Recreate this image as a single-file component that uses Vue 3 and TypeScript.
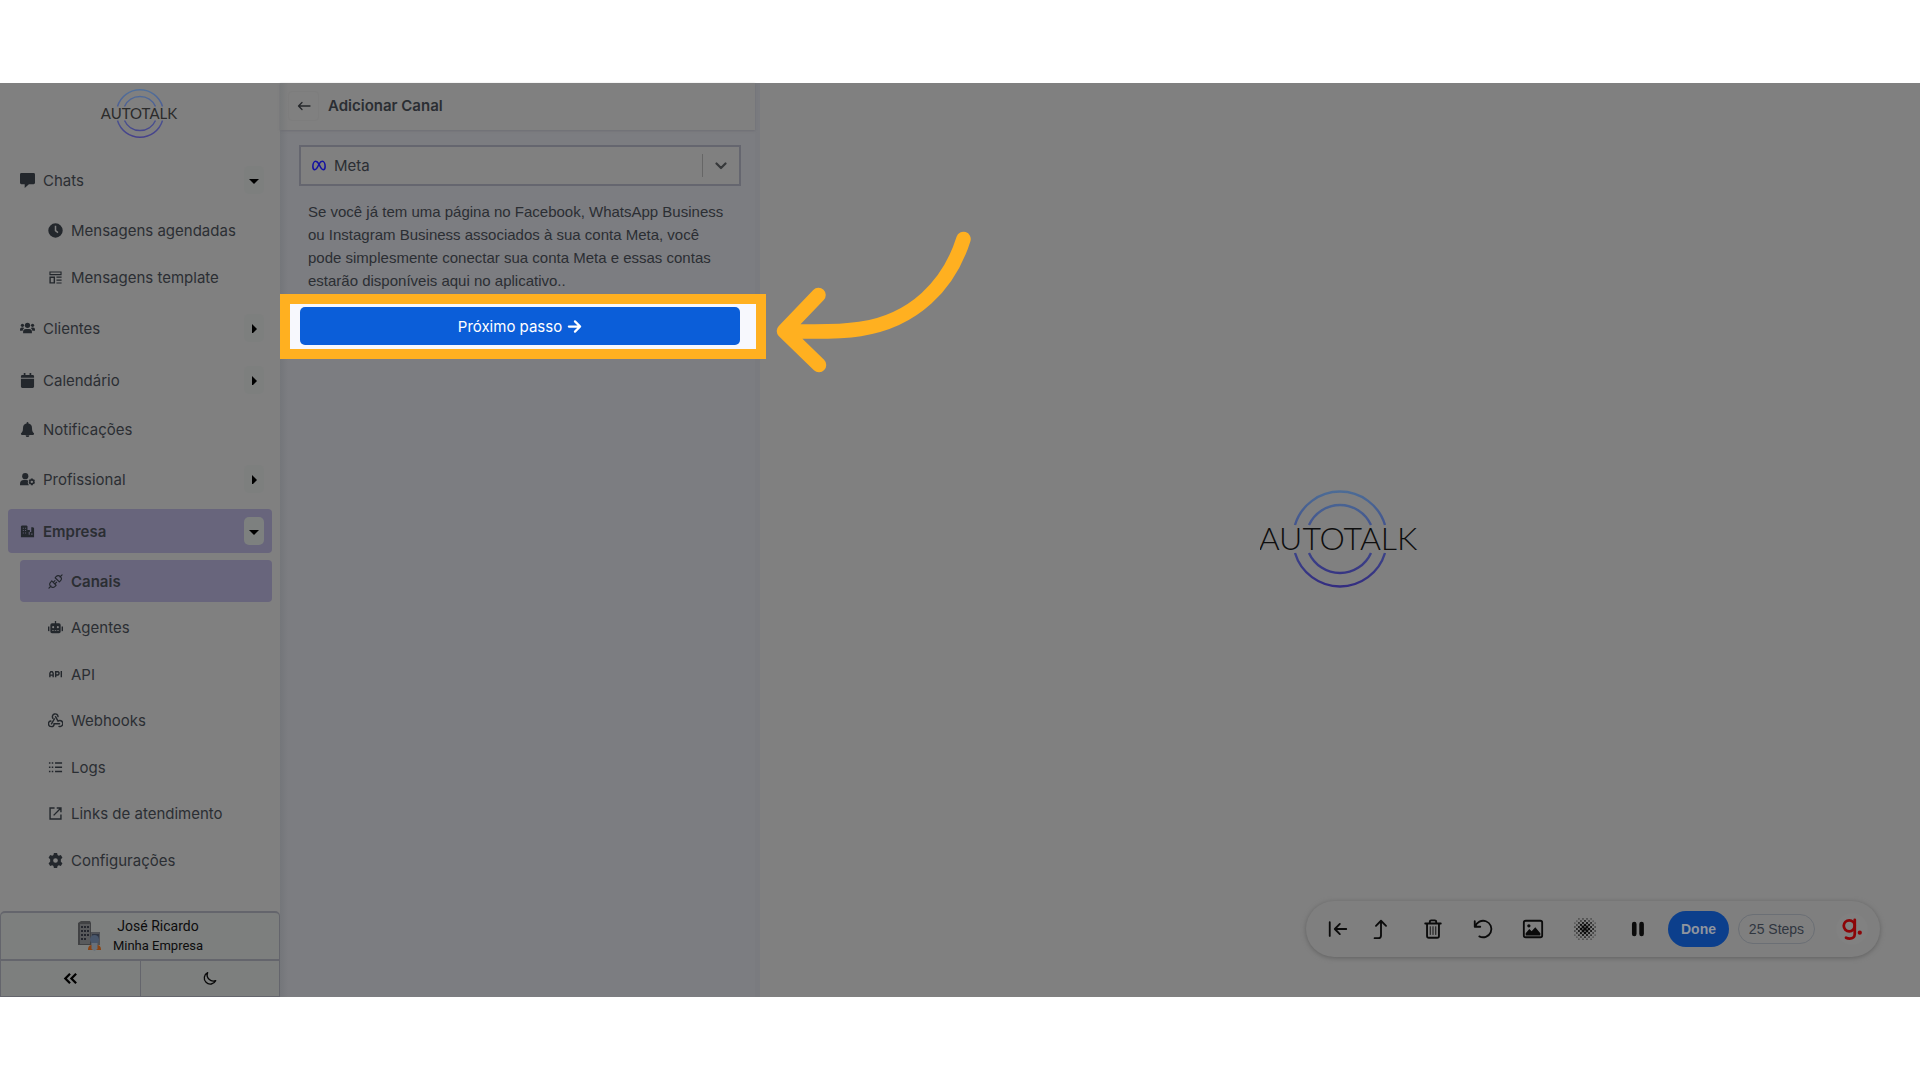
<script setup lang="ts">
import { ref } from 'vue'

interface SubItem {
  label: string
  icon: string
  active?: boolean
}
interface Item extends SubItem {
  toggle?: 'open' | 'closed'
  children?: SubItem[]
}

const items: Item[] = [
  {
    label: 'Chats',
    icon: 'chat',
    toggle: 'open',
    children: [
      { label: 'Mensagens agendadas', icon: 'clock' },
      { label: 'Mensagens template', icon: 'template' },
    ],
  },
  { label: 'Clientes', icon: 'users', toggle: 'closed' },
  { label: 'Calendário', icon: 'calendar', toggle: 'closed' },
  { label: 'Notificações', icon: 'bell' },
  { label: 'Profissional', icon: 'userCog', toggle: 'closed' },
  {
    label: 'Empresa',
    icon: 'building',
    toggle: 'open',
    active: true,
    children: [
      { label: 'Canais', icon: 'plug', active: true },
      { label: 'Agentes', icon: 'robot' },
      { label: 'API', icon: 'api' },
      { label: 'Webhooks', icon: 'webhook' },
      { label: 'Logs', icon: 'logs' },
      { label: 'Links de atendimento', icon: 'link' },
      { label: 'Configurações', icon: 'gear' },
    ],
  },
]

// Icon bodies on a 16 x 16 grid
const icons: Record<string, string> = {
  chat: '<path d="M1.500 0h13A1.500 1.500 0 0 1 16 1.500v9a1.500 1.500 0 0 1-1.500 1.500H9.500L5 16V12H1.500A1.500 1.500 0 0 1 0 10.500v-9A1.500 1.500 0 0 1 1.500 0z"/>',
  clock: '<path fill-rule="evenodd" d="M8 .3a7.700 7.700 0 1 1 0 15.400a7.700 7.700 0 0 1 0-15.400zM7.200 3v5.500l3 2.300.9-1.200L8.800 7.800V3z"/>',
  template: '<path fill-rule="evenodd" d="M1.500 1.500h13v4h-13zM2.700 2.700v1.600h10.600V2.700zM1.500 7h6v7.500h-6zM3 8.400v4.700h3V8.400zM9 7h5.500v1.300H9zM9 10.100h5.500v1.300H9zM9 13.200h5.500v1.300H9z"/>',
  users: '<circle cx="8" cy="4.600" r="2.800"/><circle cx="2.600" cy="4.600" r="1.700"/><circle cx="13.400" cy="4.600" r="1.700"/><path d="M3.300 13v-1.500a3 3 0 0 1 3-3h3.400a3 3 0 0 1 3 3V13zM0 10.400V9a2 2 0 0 1 2-2h1.200c.5 0 1 .2 1.300.5A4 4 0 0 0 2.800 10.400zM16 10.400V9a2 2 0 0 0-2-2h-1.200c-.5 0-1 .2-1.300.5a4 4 0 0 1 1.700 2.900z"/>',
  calendar: '<path d="M4 0h1.800v2h4.400V0H12v2h1.500A1.500 1.500 0 0 1 15 3.500V5H1V3.500A1.500 1.500 0 0 1 2.500 2H4zM1 6h14v8.500a1.500 1.500 0 0 1-1.500 1.500h-11A1.500 1.500 0 0 1 1 14.500z"/>',
  bell: '<path d="M8 0a1 1 0 0 1 1 1v.6a4.800 4.800 0 0 1 3.800 4.700c0 3.700 1 4.600 1.900 5.500.7.800.2 2-.9 2H2.200c-1.100 0-1.600-1.200-.9-2 .9-.9 1.900-1.800 1.900-5.500A4.800 4.800 0 0 1 7 1.600V1a1 1 0 0 1 1-1zM6 14h4a2 2 0 0 1-4 0z"/>',
  userCog: '<circle cx="5.600" cy="4.400" r="3.300"/><path d="M0 14v-1.200a4.200 4.200 0 0 1 4.200-4.200h2.600c.7 0 1.300.2 1.900.5A4.500 4.500 0 0 0 9.500 14z"/><path fill-rule="evenodd" d="M11.600 7h2l.3 1.100 1.100-.3 1 1.700-.8.900.8.900-1 1.700-1.100-.3-.3 1.300h-2l-.3-1.300-1.100.3-1-1.700.8-.9-.8-.9 1-1.700 1.100.3zm1 2.200a1.300 1.300 0 1 0 0 2.600a1.300 1.300 0 0 0 0-2.600z"/>',
  building: '<path fill-rule="evenodd" d="M1 2.500L2 1.500h5l1 1v4h2.500v2H12v-5h2l1 1V14H1zM3 4v1h1V4zM5.500 4v1h1V4zM3 6.500v1h1v-1zM5.500 6.500v1h1v-1zM3 9v1h1V9zM5.500 9v1h1V9zM9.300 8.500v3h1v-3zM12 10v1.500h1.300V10z"/>',
  plug: '<g fill="none" stroke="currentColor" stroke-width="1.200" stroke-linecap="round" stroke-linejoin="round"><path d="M1 15l2.200-2.200M12.800 3.200L15 1M4 7.400l4.600 4.600-1.100 1.200a3.200 3.200 0 0 1-4.600-4.600zM7.600 4l4.500 4.500 1.100-1.100a3.200 3.200 0 0 0-4.600-4.600zM5.600 8.900l1.800-1.800M7.300 10.600l1.800-1.800"/></g>',
  robot: '<path fill-rule="evenodd" d="M7.300 1h1.400v2.500h3A1.800 1.800 0 0 1 13.500 5.300v7a1.700 1.700 0 0 1-1.700 1.700H4.200a1.700 1.700 0 0 1-1.700-1.700v-7A1.800 1.800 0 0 1 4.300 3.500h3zM5.500 6.500a1.100 1.100 0 1 0 0 2.200a1.100 1.100 0 0 0 0-2.200zM10.500 6.500a1.100 1.100 0 1 0 0 2.200a1.100 1.100 0 0 0 0-2.200zM4.500 10.800v1h1.600v-1zM7.200 10.800v1h1.600v-1zM9.900 10.800v1h1.600v-1zM0 7h1.500v5H.8A.8.800 0 0 1 0 11.200zM14.500 7H16v4.200a.8.800 0 0 1-.8.800h-.7z"/>',
  api: '<g fill="none" stroke="currentColor" stroke-width="1.500"><path d="M2 11V6.500L3 5h1.500l1 1.500V11M2 8.700h3.500M8.200 11V5h2.500l1 1v1.500l-1 1H8.200M14.200 4.300V11"/></g>',
  webhook: '<g fill="none" stroke="currentColor" stroke-width="1.500" stroke-linecap="round"><path d="M5.200 5.600a3 3 0 1 1 5.500-1.700M8 3.900L10.700 8.700a3.200 3.200 0 1 1 1 5.600M12.300 11.500H6.500a3 3 0 1 1-3.400-2.900M3.700 11.500L6.800 6.300"/></g>',
  logs: '<path d="M1 2.500h1.600V4H1zM4 2.500h1.600V4H4zM7.500 2.500H15V4H7.500zM1 7h1.600v1.500H1zM4 7h1.600v1.500H4zM7.500 7H15v1.500H7.500zM1 11.500h1.600V13H1zM4 11.500h1.600V13H4zM7.500 11.500H15V13H7.500z"/>',
  link: '<g fill="none" stroke="currentColor" stroke-width="1.500"><path d="M7 2.200H2.200v11.600h11.600V9M9.300 2.200h4.500v4.500M13.800 2.200L6 10"/></g>',
  gear: '<path fill-rule="evenodd" d="M6.300 0h3.400l.5 2.200 1.300.8 2.200-.8 1.700 2.900L13.700 6.700v2.600l1.700 1.600-1.700 2.900-2.200-.8-1.300.8-.5 2.200H6.300l-.5-2.200-1.300-.8-2.200.8L.6 10.900l1.700-1.600V6.700L.6 5.100l1.700-2.900 2.200.8 1.300-.8zM8 5.500a2.500 2.500 0 1 0 0 5a2.500 2.500 0 0 0 0-5z"/>',
}

const channel = ref('Meta')

// Dither pattern for the blur tool: dots shrink away from the centre
const dots: { x: number; y: number; r: number }[] = []
for (let row = -5; row <= 5; row++) {
  for (let col = -5; col <= 5; col++) {
    const d = Math.hypot(row, col)
    if ((row + col) % 2 === 0 && d < 6.500) {
      dots.push({ x: 12 + col * 2.200, y: 12 + row * 2.200, r: Math.max(0.6, 1.900 - d * 0.23) })
    }
  }
}
</script>

<template>
  <div class="page">
    <div class="frame">
      <aside class="sidebar">
        <div class="brand">
          <svg class="logo" viewBox="0 0 160 98" role="img" aria-label="Autotalk">
            <defs>
              <linearGradient id="ring-small" x1="0" y1="0" x2="0" y2="98" gradientUnits="userSpaceOnUse">
                <stop offset="0" stop-color="#52719a" />
                <stop offset="1" stop-color="#45408a" />
              </linearGradient>
            </defs>
            <g fill="none" stroke="url(#ring-small)" stroke-width="3">
              <path d="M35 35A47 47 0 0 1 125 35M49 35A34 34 0 0 1 111 35M35 63A47 47 0 0 0 125 63M49 63A34 34 0 0 0 111 63" />
            </g>
            <text x="78" y="60" text-anchor="middle" class="wordmark">AUTOTALK</text>
          </svg>
        </div>

        <nav class="nav">
          <template v-for="item in items" :key="item.label">
            <div class="item" :class="{ active: item.active, plain: !item.toggle }">
              <a href="#" class="item-link">
                <svg class="icon" viewBox="0 0 16 16" v-html="icons[item.icon]"></svg>
                <span>{{ item.label }}</span>
              </a>
              <button v-if="item.toggle" class="toggle" type="button" :aria-label="item.label">
                <svg viewBox="0 0 10 10">
                  <path v-if="item.toggle === 'open'" d="M0 4h10L5 9z" />
                  <path v-else d="M3 1v10l5-5z" />
                </svg>
              </button>
            </div>
            <div v-if="item.children" class="submenu" :class="{ grow: item.active }">
              <a
                v-for="child in item.children"
                :key="child.label"
                href="#"
                class="subitem"
                :class="{ active: child.active }"
              >
                <svg class="icon" viewBox="0 0 16 16" v-html="icons[child.icon]"></svg>
                <span>{{ child.label }}</span>
              </a>
            </div>
          </template>
        </nav>

        <footer class="account">
          <div class="user">
            <svg class="avatar" viewBox="0 0 24 30">
              <path d="M1 2L4 0h9l1 2v22H1z" fill="#414244" />
              <path d="M3 3h10v20H3z" fill="#595a5c" />
              <path d="M4 5h2v2H4zM7 5h2v2H7zM10 5h2v2h-2zM4 9h2v2H4zM7 9h2v2H7zM10 9h2v2h-2zM4 13h2v2H4zM7 13h2v2H7zM10 13h2v2h-2zM4 17h2v2H4zM7 17h2v2H7z" fill="#25272e" />
              <path d="M14 11h9v13h-9z" fill="#505257" />
              <path d="M15 13h7v5h-7z" fill="#2f3644" />
              <path d="M11 29c0-4 2-5 4-5h5c2 0 4 1 4 5z" fill="#8a4414" />
              <circle cx="17.500" cy="18.500" r="4.500" fill="#48566b" />
              <path d="M14.500 22h6v6l-3 2-3-2z" fill="#68707a" />
            </svg>
            <div class="user-text">
              <span class="user-name">José Ricardo</span>
              <span class="user-company">Minha Empresa</span>
            </div>
          </div>
          <div class="account-actions">
            <button type="button" aria-label="Recolher menu">
              <svg viewBox="0 0 16 16" fill="none" stroke="#000" stroke-width="2.400">
                <path d="M7.500 3L2.500 8l5 5M14 3L9 8l5 5" />
              </svg>
            </button>
            <button type="button" aria-label="Modo escuro">
              <svg viewBox="0 0 16 16" fill="none" stroke="#0a0a0a" stroke-width="1.400" stroke-linejoin="round">
                <path d="M6 1.800a6.400 6.400 0 1 0 8.600 8.500A6.600 6.600 0 0 1 6 1.800z" />
              </svg>
            </button>
          </div>
        </footer>
      </aside>

      <section class="panel">
        <header class="panel-head">
          <button class="back" type="button" aria-label="Voltar">
            <svg viewBox="0 0 14 14" fill="none" stroke="#26282b" stroke-width="1.300" stroke-linecap="round" stroke-linejoin="round">
              <path d="M13 7H1.500M5 3.500L1.500 7 5 10.500" />
            </svg>
          </button>
          <h1>Adicionar Canal</h1>
        </header>

        <div class="panel-body">
          <label class="select-box">
            <svg class="meta" viewBox="0 0 16 12" fill="none" stroke="#1512a0" stroke-width="1.800">
              <path d="M8 4.500C6.700 2.300 5.500 1.200 4.200 1.200 2.400 1.200 1 4 1 7.200c0 2.200.8 3.600 2.200 3.600C5.200 10.800 6.500 7.500 8 4.500c1.300-2.300 2.500-3.300 3.800-3.300C13.600 1.200 15 4 15 7.200c0 2.200-.8 3.600-2.200 3.600-2 0-3.300-3.300-4.800-6.300z" />
            </svg>
            <select v-model="channel" aria-label="Canal">
              <option value="Meta">Meta</option>
            </select>
            <span class="separator"></span>
            <svg class="chevron" viewBox="0 0 12 8" fill="none" stroke="#36383a" stroke-width="2.200" stroke-linecap="round" stroke-linejoin="round">
              <path d="M1.500 1.500L6 6l4.500-4.500" />
            </svg>
          </label>

          <p class="description">
            Se você já tem uma página no Facebook, WhatsApp Business ou Instagram Business associados à sua
            conta Meta, você pode simplesmente conectar sua conta Meta e essas contas estarão disponíveis aqui
            no aplicativo..
          </p>

          <div class="step">
            <div class="highlight"></div>
            <button class="next" type="button">
              <span>Próximo passo</span>
              <svg viewBox="0 0 16 16" fill="none" stroke="#fff" stroke-width="2.400" stroke-linecap="round" stroke-linejoin="round">
                <path d="M2 8h12M8.500 2.500L14 8l-5.500 5.500" />
              </svg>
            </button>
            <svg class="pointer" viewBox="0 0 200 144" fill="none" stroke="#ffb020" stroke-width="14.500" stroke-linecap="round" stroke-linejoin="round">
              <path d="M188.500 8C174 54 139 90 85 98C65 101 36 101 9 100M43.500 64L9 100L44 134" />
            </svg>
          </div>
        </div>
      </section>

      <main class="stage">
        <svg class="logo large" viewBox="0 0 160 98" role="img" aria-label="Autotalk">
          <defs>
            <linearGradient id="ring-large" x1="0" y1="0" x2="0" y2="98" gradientUnits="userSpaceOnUse">
              <stop offset="0" stop-color="#4c6c96" />
              <stop offset="1" stop-color="#332c80" />
            </linearGradient>
          </defs>
          <g fill="none" stroke="url(#ring-large)" stroke-width="2.400">
            <path d="M35 35A47 47 0 0 1 125 35M49 35A34 34 0 0 1 111 35M35 63A47 47 0 0 0 125 63M49 63A34 34 0 0 0 111 63" />
          </g>
          <text x="78" y="60" text-anchor="middle" class="wordmark">AUTOTALK</text>
        </svg>

        <div class="toolbar">
          <button class="tool slim" type="button" aria-label="Recolher">
            <svg viewBox="0 0 24 24"><path d="M3 4.500v15M21 12H9M14 6.500L8.500 12l5.500 5.500" /></svg>
          </button>
          <button class="tool wide" type="button" aria-label="Inserir passo">
            <svg viewBox="0 0 24 24"><path d="M5 22h4a3 3 0 0 0 3-3V3M6.500 8.500L12 3l5.500 5.500" /></svg>
          </button>
          <button class="tool" type="button" aria-label="Excluir">
            <svg viewBox="0 0 24 24">
              <path d="M3.500 6h17M5.500 6v13.500a2 2 0 0 0 2 2h9a2 2 0 0 0 2-2V6M8.500 5.500V4a1.500 1.500 0 0 1 1.500-1.500h4A1.500 1.500 0 0 1 15.500 4v1.500" />
              <path class="thin" d="M9 9.500v8.500M12 9.500v8.500M15 9.500v8.500" />
            </svg>
          </button>
          <button class="tool" type="button" aria-label="Desfazer">
            <svg viewBox="0 0 24 24"><path d="M3 3.500v6h6M3.500 9.500a9 9 0 1 1 4.500 10.500" /></svg>
          </button>
          <button class="tool" type="button" aria-label="Imagem">
            <svg viewBox="0 0 24 24">
              <rect x="2" y="3" width="20" height="18" rx="2" />
              <circle cx="7.500" cy="8.500" r="1.800" class="solid" />
              <path d="M4 19v-2.500l4-4.500 2.500 2.500L14.500 10l5.500 6.500V19z" class="solid" />
            </svg>
          </button>
          <button class="tool wide" type="button" aria-label="Desfocar">
            <svg viewBox="0 0 24 24">
              <circle v-for="(dot, i) in dots" :key="i" :cx="dot.x" :cy="dot.y" :r="dot.r" class="solid" />
            </svg>
          </button>
          <button class="tool" type="button" aria-label="Pausar">
            <svg viewBox="0 0 24 24"><path class="thick" d="M9 6.500v11M17 6.500v11" /></svg>
          </button>
          <button class="done" type="button">Done</button>
          <button class="steps" type="button">25 Steps</button>
          <span class="guide-mark">
            <svg viewBox="0 0 24 26" fill="none" stroke="#8c0508" stroke-width="3" stroke-linecap="round">
              <circle cx="9" cy="9.500" r="6" />
              <path d="M15 3v15.500c0 3.300-2.500 5-5.500 5-1.600 0-3-.4-4-1" />
              <circle cx="20.500" cy="17" r="2.300" fill="#8c0508" stroke="none" />
            </svg>
          </span>
        </div>
      </main>
    </div>
  </div>
</template>

<style>
body {
  margin: 0;
  background: #fff;
}
</style>

<style scoped>
* {
  box-sizing: border-box;
}

.page {
  min-height: 100vh;
  padding: 83px 0;
  display: flex;
  flex-direction: column;
  font-family: Inter, 'Liberation Sans', sans-serif;
  font-size: 15px;
  color: #2b2e33;
}

.frame {
  flex: 1;
  display: flex;
  background: #808080;
}

button {
  margin: 0;
  padding: 0;
  border: 0;
  background: none;
  font: inherit;
  color: inherit;
  display: flex;
  align-items: center;
  justify-content: center;
}

a {
  color: inherit;
  text-decoration: none;
}

/* Sidebar */
.sidebar {
  width: 280px;
  flex-shrink: 0;
  display: flex;
  flex-direction: column;
}

.brand {
  height: 75px;
  padding-top: 6px;
  display: flex;
  align-items: flex-start;
  justify-content: center;
}

.logo {
  width: 80px;
  height: 49px;
}

.logo.large {
  width: 160px;
  height: 98px;
}

.wordmark {
  font-family: Lato, sans-serif;
  font-weight: 300;
  font-size: 32px;
  fill: #0e0e0e;
}

.brand .wordmark {
  fill: #2b2b2b;
  font-weight: 400;
  font-size: 30px;
}

.nav {
  flex: 1;
  display: flex;
  flex-direction: column;
  padding: 0 8px 30px;
}

.item {
  height: 44px;
  padding: 0 8px 0 12px;
  margin-bottom: 8px;
  display: flex;
  align-items: center;
  border-radius: 4px;
}

.item.plain {
  height: 39px;
}

.item:has(+ .submenu) {
  margin-bottom: 7px;
}

.item-link {
  flex: 1;
  display: flex;
  align-items: center;
  gap: 8px;
}

.icon {
  width: 15px;
  height: 15px;
  fill: currentColor;
  color: #23272c;
}

.active {
  background: #68657c;
  font-weight: 600;
}

.toggle {
  width: 20px;
  height: 28px;
  border-radius: 5px;
  background: #7d7f7e;
}

.active .toggle {
  background: #7d807f;
}

.toggle svg {
  width: 10px;
  height: 10px;
}

.submenu {
  display: flex;
  flex-direction: column;
  gap: 5px;
  margin: 0 0 8px 12px;
}

.submenu.grow {
  flex: 1;
  gap: 4px;
  justify-content: space-between;
  margin-bottom: 0;
}

.subitem {
  height: 42px;
  padding-left: 28px;
  display: flex;
  align-items: center;
  gap: 8px;
  border-radius: 4px;
}

.account {
  border: 1px solid #64656c;
  border-top-width: 2px;
  border-radius: 5px 5px 0 0;
  background: #7d7f7e;
  color: #0c0c0d;
}

.user {
  height: 46px;
  display: flex;
  align-items: center;
  justify-content: center;
  gap: 12px;
}

.avatar {
  width: 24px;
  height: 30px;
}

.user-text {
  display: flex;
  flex-direction: column;
  align-items: center;
  font-family: Roboto, sans-serif;
}

.user-name {
  font-size: 14px;
  line-height: 19px;
}

.user-company {
  font-size: 13px;
  line-height: 19px;
}

.account-actions {
  display: flex;
  height: 37px;
  border-top: 2px solid #64656c;
}

.account-actions button {
  flex: 1;
}

.account-actions button + button {
  border-left: 1px solid #64656c;
}

.account-actions svg {
  width: 15px;
  height: 15px;
}

/* Channel panel */
.panel {
  width: 480px;
  flex-shrink: 0;
  border-right: 5px solid #7a7b7f;
  background: linear-gradient(90deg, #74767a, #7c7d81 8px);
}

.panel-head {
  height: 47px;
  padding: 0 8px 2px;
  display: flex;
  align-items: center;
  gap: 9px;
  background: linear-gradient(90deg, #77797a, #808080 8px);
  box-shadow: 0 1px 2px #6e6f74;
}

.back {
  width: 31px;
  height: 30px;
  border: 1px solid #7d7d7d;
  border-radius: 4px;
}

.back svg {
  width: 14px;
  height: 14px;
}

h1 {
  margin: 0;
  font-size: 15px;
  font-weight: 600;
}

.panel-body {
  padding: 15px 14px 0 19px;
}

.select-box {
  height: 41px;
  padding: 0 12px 0 11px;
  display: flex;
  align-items: center;
  border: 2px solid #65666f;
  background: #808080;
}

.meta {
  width: 14px;
  height: 11px;
}

select {
  flex: 1;
  margin-left: 8px;
  padding: 0;
  border: 0;
  appearance: none;
  background: none;
  font: inherit;
  color: inherit;
}

.separator {
  width: 1px;
  height: 23px;
  background: #666;
}

.chevron {
  width: 12px;
  height: 8px;
  margin-left: 12px;
}

.description {
  margin: 14px 0 15px;
  padding: 0 8px 0 9px;
  font-family: 'Liberation Sans', Arial, sans-serif;
  font-size: 15px;
  line-height: 23px;
}

.step {
  position: relative;
  padding: 0 1px;
}

.highlight {
  position: absolute;
  inset: -13px -25px -14px -19px;
  border: 10px solid #ffb020;
  background: #f7f8fd;
}

.next {
  position: relative;
  width: 100%;
  height: 38px;
  gap: 5px;
  border-radius: 5px;
  background: #0b5ed9;
  color: #fff;
}

.next svg {
  width: 15px;
  height: 15px;
}

.pointer {
  position: absolute;
  left: 100%;
  top: -76px;
  width: 200px;
  height: 144px;
  margin-left: 34px;
}

/* Right-hand area */
.stage {
  position: relative;
  flex: 1;
  padding-bottom: 3px;
  display: flex;
  align-items: center;
  justify-content: center;
}

.toolbar {
  position: absolute;
  right: 40px;
  bottom: 40px;
  height: 56px;
  padding: 0 12px 0 16px;
  display: flex;
  align-items: center;
  border-radius: 28px;
  background: #7f7f7f;
  box-shadow: 0 1px 5px #606060;
}

.tool {
  width: 50px;
  height: 40px;
}

.tool.slim {
  width: 32px;
}

.tool.wide {
  width: 54px;
}

.tool svg {
  width: 22px;
  height: 22px;
  fill: none;
  stroke: #0b0b0b;
  stroke-width: 2;
  stroke-linecap: round;
  stroke-linejoin: round;
}

.tool .thin {
  stroke-width: 1;
}

.tool .thick {
  stroke-width: 5;
}

.tool .solid {
  fill: #0b0b0b;
  stroke: none;
}

.done,
.steps {
  font-family: 'Liberation Sans', Arial, sans-serif;
  font-size: 14px;
}

.done {
  width: 61px;
  height: 36px;
  margin-left: 6px;
  border-radius: 18px;
  background: #0c3f8c;
  color: #8f959e;
  font-weight: 700;
}

.steps {
  width: 77px;
  height: 30px;
  margin-left: 9px;
  border: 1px solid #6b6f75;
  border-radius: 15px;
  color: #30363f;
}

.guide-mark {
  width: 32px;
  height: 32px;
  margin-left: 21px;
  display: flex;
  align-items: center;
  justify-content: center;
  border-radius: 50%;
  background: #818181;
}

.guide-mark svg {
  width: 22px;
  height: 24px;
}
</style>
